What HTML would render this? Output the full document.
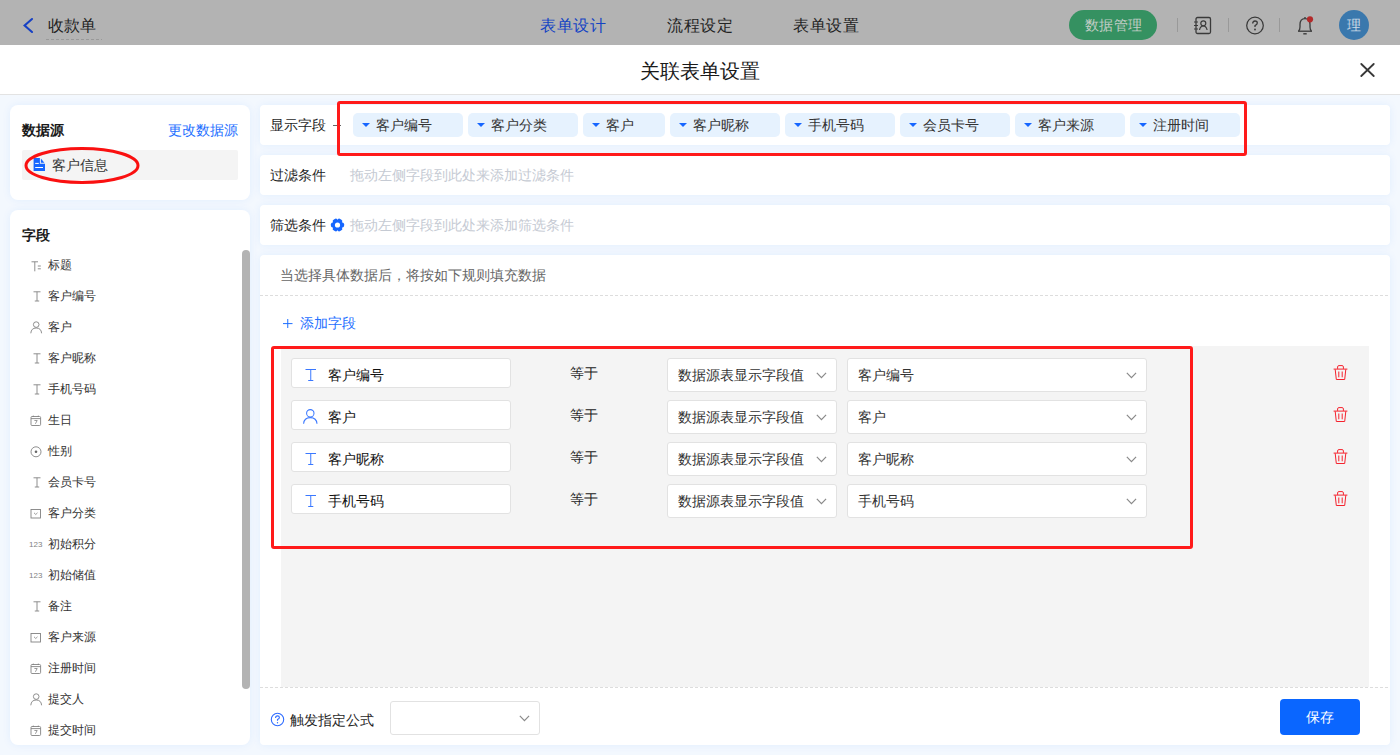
<!DOCTYPE html>
<html><head><meta charset="utf-8">
<style>
*{box-sizing:border-box;margin:0;padding:0}
html,body{width:1400px;height:755px;overflow:hidden;background:#f3f8fe;font-family:"Liberation Sans",sans-serif;color:#333;font-size:14px}
.a{position:absolute}
.t{position:absolute;white-space:nowrap;line-height:1}
#hdr{left:0;top:0;width:1400px;height:45px;background:#b3b3b3}
#mh{left:0;top:45px;width:1400px;height:50px;background:#fff;border-bottom:1px solid #e3e3e3}
.card{position:absolute;background:#fff;box-shadow:0 0 8px rgba(0,120,255,0.08)}
.tag{position:absolute;top:113px;height:24px;background:#e6f2fe;border-radius:5px}
.tag .tri{position:absolute;left:8.5px;top:10px;width:0;height:0;border-left:4.3px solid transparent;border-right:4.3px solid transparent;border-top:4.6px solid #1666ff}
.tag .tx{position:absolute;left:23px;top:5px;font-size:14px;line-height:14px;color:#333;white-space:nowrap}
.fld{position:absolute;left:22px;width:200px;height:20px}
.fld .ic{position:absolute;left:8px;top:0}
.fld .tx{position:absolute;left:26px;top:0;font-size:12px;line-height:12px;color:#333;white-space:nowrap}
.inp{position:absolute;left:291px;width:220px;height:30px;background:#fff;border:1px solid #e2e2e2;border-radius:3px}
.inp .tx{position:absolute;left:36px;top:9px;font-size:14px;line-height:14px;color:#111;white-space:nowrap}
.sel{position:absolute;height:34px;background:#fff;border:1px solid #e2e2e2;border-radius:3px}
.sel .tx{position:absolute;left:10px;top:9px;font-size:14px;line-height:14px;color:#333;white-space:nowrap}
.chev{position:absolute;width:10.5px;height:6.5px;overflow:visible}
.eq{position:absolute;left:570px;font-size:14px;line-height:14px;color:#222}
</style></head><body>
<!-- top header -->
<div id="hdr" class="a">
  <svg class="a" style="left:22px;top:17px" width="12" height="17" viewBox="0 0 12 17"><path d="M10 2 L2.6 8.5 L10 15" fill="none" stroke="#1640c4" stroke-width="2.1" stroke-linecap="round" stroke-linejoin="miter"/></svg>
  <div class="t" style="left:48px;top:18px;font-size:16px;color:#232323">收款单</div>
  <div class="a" style="left:46px;top:39px;width:56px;height:1px;background:repeating-linear-gradient(90deg,#999 0 3px,transparent 3px 5px)"></div>
  <div class="t" style="left:540px;top:18px;font-size:16px;letter-spacing:0.7px;color:#1443c4">表单设计</div>
  <div class="t" style="left:667px;top:18px;font-size:16px;letter-spacing:0.7px;color:#232323">流程设定</div>
  <div class="t" style="left:793px;top:18px;font-size:16px;letter-spacing:0.7px;color:#232323">表单设置</div>
  <div class="a" style="left:1069px;top:10px;width:88px;height:30px;border-radius:15px;background:#359161"></div>
  <div class="t" style="left:1085px;top:18px;font-size:14px;letter-spacing:0.3px;color:#c2cdc6">数据管理</div>
  <div class="a" style="left:1177px;top:18px;width:1px;height:14px;background:#999"></div>
  <div class="a" style="left:1228px;top:18px;width:1px;height:14px;background:#999"></div>
  <div class="a" style="left:1279px;top:18px;width:1px;height:14px;background:#999"></div>
  <!-- contact icon -->
  <svg class="a" style="left:1192px;top:16px" width="20" height="19" viewBox="0 0 20 19"><rect x="4" y="1.5" width="14.5" height="16" rx="1.5" fill="none" stroke="#3a3a3a" stroke-width="1.3"/><path d="M2 6h4M2 9.5h4M2 13h4" stroke="#3a3a3a" stroke-width="1.1"/><circle cx="11.3" cy="7.3" r="2.5" fill="none" stroke="#3a3a3a" stroke-width="1.2"/><path d="M7.5 14 Q8.3 10 11.3 10 Q14.3 10 15.1 14" fill="none" stroke="#3a3a3a" stroke-width="1.2"/></svg>
  <!-- help -->
  <svg class="a" style="left:1245px;top:16px" width="20" height="19" viewBox="0 0 20 19"><circle cx="10" cy="9.5" r="8.3" fill="none" stroke="#3a3a3a" stroke-width="1.25"/><path d="M7.7 7.4 Q7.7 5 10 5 Q12.3 5 12.3 7.1 Q12.3 8.5 10 9.6 L10 11" fill="none" stroke="#3a3a3a" stroke-width="1.3"/><circle cx="10" cy="13.5" r="0.9" fill="#3a3a3a"/></svg>
  <!-- bell -->
  <svg class="a" style="left:1296px;top:15px" width="20" height="21" viewBox="0 0 20 21"><path d="M9 3 L9 2" stroke="#3a3a3a" stroke-width="1.4"/><path d="M2.6 16 Q4 14.6 4 12 L4 9.5 Q4 3.6 9 3.6 Q14 3.6 14 9.5 L14 12 Q14 14.6 15.4 16" fill="none" stroke="#3a3a3a" stroke-width="1.3"/><path d="M2 16.2 H16" stroke="#3a3a3a" stroke-width="1.3"/><path d="M7.3 18.8 H10.7" stroke="#3a3a3a" stroke-width="1.4"/><circle cx="14" cy="4.3" r="3.1" fill="#b32a2a"/></svg>
  <div class="a" style="left:1339px;top:10px;width:30px;height:30px;border-radius:50%;background:#3a78ad"></div>
  <div class="t" style="left:1347px;top:19px;font-size:13.5px;color:#c9d8e6">理</div>
</div>

<!-- modal header -->
<div id="mh" class="a">
  <div class="t" style="left:640px;top:16px;font-size:20px;color:#1a1a1a">关联表单设置</div>
  <svg class="a" style="left:1360px;top:17.5px" width="15" height="14" viewBox="0 0 15 14"><path d="M1.3 1 L13.7 13 M13.7 1 L1.3 13" stroke="#383838" stroke-width="1.8" stroke-linecap="round"/></svg>
</div>

<!-- left cards -->
<div class="card" style="left:10px;top:105px;width:240px;height:95px;border-radius:8px"></div>
<div class="t" style="left:22px;top:123px;font-size:14px;font-weight:bold;color:#1a1a1a">数据源</div>
<div class="t" style="left:168px;top:123px;font-size:14px;color:#1e6fff">更改数据源</div>
<div class="a" style="left:22px;top:150px;width:216px;height:30px;background:#f4f4f4;border-radius:2px"></div>
<svg class="a" style="left:33px;top:157px" width="13" height="15" viewBox="0 0 13 15"><path d="M0.6 1 H6.9 V6.8 H12 V14.1 H0.6 Z" fill="#1666ff"/><path d="M7.9 1.6 L11.4 5.8 H7.9 Z" fill="#1666ff"/><path d="M2.2 6.4 H5.8 M2.2 10.5 H10" stroke="#fff" stroke-width="1"/></svg>
<div class="t" style="left:52px;top:158px;font-size:14px;color:#333">客户信息</div>

<div class="card" style="left:10px;top:210px;width:240px;height:535px;border-radius:8px"></div>
<div class="t" style="left:22px;top:228px;font-size:14px;font-weight:bold;color:#1a1a1a">字段</div>
<div class="a" style="left:242px;top:250px;width:8px;height:439px;border-radius:4px;background:#b3b3b3"></div>

<div class="fld" style="top:259px"><svg class="ic" style="left:9px;top:2px" width="11" height="11" viewBox="0 0 11 11"><path d="M0.5 0.8 H7 M3.8 0.8 V10.3" stroke="#828282" stroke-width="0.9"/><path d="M6.8 5 H9.8 M6.8 7.8 H9.8" stroke="#828282" stroke-width="0.9"/></svg><div class="tx">标题</div></div>
<div class="fld" style="top:290px"><svg class="ic" style="left:11px;top:1px" width="8" height="11" viewBox="0 0 8 11"><path d="M0.5 0.8 H7.5 M4 0.8 V10 M1.8 10 H6.2" stroke="#828282" stroke-width="0.9"/></svg><div class="tx">客户编号</div></div>
<div class="fld" style="top:321px"><svg class="ic" style="left:8px;top:0px" width="13" height="13" viewBox="0 0 13 13"><circle cx="6.2" cy="3.6" r="2.8" fill="none" stroke="#828282" stroke-width="0.9"/><path d="M0.8 12.3 Q1.2 7 6.2 7 Q11.2 7 11.6 12.3" fill="none" stroke="#828282" stroke-width="0.9"/></svg><div class="tx">客户</div></div>
<div class="fld" style="top:352px"><svg class="ic" style="left:11px;top:1px" width="8" height="11" viewBox="0 0 8 11"><path d="M0.5 0.8 H7.5 M4 0.8 V10 M1.8 10 H6.2" stroke="#828282" stroke-width="0.9"/></svg><div class="tx">客户昵称</div></div>
<div class="fld" style="top:383px"><svg class="ic" style="left:11px;top:1px" width="8" height="11" viewBox="0 0 8 11"><path d="M0.5 0.8 H7.5 M4 0.8 V10 M1.8 10 H6.2" stroke="#828282" stroke-width="0.9"/></svg><div class="tx">手机号码</div></div>
<div class="fld" style="top:414px"><svg class="ic" style="left:8px;top:1px" width="12" height="12" viewBox="0 0 12 12"><rect x="1" y="1.5" width="9.6" height="9" rx="1" fill="none" stroke="#828282" stroke-width="0.9"/><path d="M1 3.6 H10.6 M3.3 0.6 V2 M8.3 0.6 V2" stroke="#828282" stroke-width="0.9"/><path d="M4.4 5.5 H7.2 L5.4 8.8" fill="none" stroke="#828282" stroke-width="0.8"/></svg><div class="tx">生日</div></div>
<div class="fld" style="top:445px"><svg class="ic" style="left:7.5px;top:1px" width="12" height="12" viewBox="0 0 12 12"><circle cx="6" cy="5.8" r="5" fill="none" stroke="#828282" stroke-width="0.9"/><circle cx="6" cy="5.8" r="1.3" fill="#666"/></svg><div class="tx">性别</div></div>
<div class="fld" style="top:476px"><svg class="ic" style="left:11px;top:1px" width="8" height="11" viewBox="0 0 8 11"><path d="M0.5 0.8 H7.5 M4 0.8 V10 M1.8 10 H6.2" stroke="#828282" stroke-width="0.9"/></svg><div class="tx">会员卡号</div></div>
<div class="fld" style="top:507px"><svg class="ic" style="left:8px;top:1px" width="12" height="12" viewBox="0 0 12 12"><rect x="1" y="1.5" width="9.5" height="8.5" fill="none" stroke="#828282" stroke-width="0.9"/><path d="M4 4.8 L5.75 6.5 L7.5 4.8" fill="none" stroke="#828282" stroke-width="0.8"/></svg><div class="tx">客户分类</div></div>
<div class="fld" style="top:538px"><div class="ic t" style="left:7px;top:3px;font-size:8px;color:#828282;width:auto;height:auto">123</div><div class="tx">初始积分</div></div>
<div class="fld" style="top:569px"><div class="ic t" style="left:7px;top:3px;font-size:8px;color:#828282;width:auto;height:auto">123</div><div class="tx">初始储值</div></div>
<div class="fld" style="top:600px"><svg class="ic" style="left:11px;top:1px" width="8" height="11" viewBox="0 0 8 11"><path d="M0.5 0.8 H7.5 M4 0.8 V10 M1.8 10 H6.2" stroke="#828282" stroke-width="0.9"/></svg><div class="tx">备注</div></div>
<div class="fld" style="top:631px"><svg class="ic" style="left:8px;top:1px" width="12" height="12" viewBox="0 0 12 12"><rect x="1" y="1.5" width="9.5" height="8.5" fill="none" stroke="#828282" stroke-width="0.9"/><path d="M4 4.8 L5.75 6.5 L7.5 4.8" fill="none" stroke="#828282" stroke-width="0.8"/></svg><div class="tx">客户来源</div></div>
<div class="fld" style="top:662px"><svg class="ic" style="left:8px;top:1px" width="12" height="12" viewBox="0 0 12 12"><rect x="1" y="1.5" width="9.6" height="9" rx="1" fill="none" stroke="#828282" stroke-width="0.9"/><path d="M1 3.6 H10.6 M3.3 0.6 V2 M8.3 0.6 V2" stroke="#828282" stroke-width="0.9"/><path d="M4.4 5.5 H7.2 L5.4 8.8" fill="none" stroke="#828282" stroke-width="0.8"/></svg><div class="tx">注册时间</div></div>
<div class="fld" style="top:693px"><svg class="ic" style="left:8px;top:0px" width="13" height="13" viewBox="0 0 13 13"><circle cx="6.2" cy="3.6" r="2.8" fill="none" stroke="#828282" stroke-width="0.9"/><path d="M0.8 12.3 Q1.2 7 6.2 7 Q11.2 7 11.6 12.3" fill="none" stroke="#828282" stroke-width="0.9"/></svg><div class="tx">提交人</div></div>
<div class="fld" style="top:724px"><svg class="ic" style="left:8px;top:1px" width="12" height="12" viewBox="0 0 12 12"><rect x="1" y="1.5" width="9.6" height="9" rx="1" fill="none" stroke="#828282" stroke-width="0.9"/><path d="M1 3.6 H10.6 M3.3 0.6 V2 M8.3 0.6 V2" stroke="#828282" stroke-width="0.9"/><path d="M4.4 5.5 H7.2 L5.4 8.8" fill="none" stroke="#828282" stroke-width="0.8"/></svg><div class="tx">提交时间</div></div>

<!-- right cards -->
<div class="card" style="left:260px;top:105px;width:1130px;height:40px;border-radius:4px"></div>
<div class="t" style="left:270px;top:118px;font-size:14px;color:#1f1f1f">显示字段</div>
<div class="a" style="left:333px;top:125px;width:8px;height:1px;background:#666"></div>
<div class="tag" style="left:353px;width:110px"><div class="tri"></div><div class="tx">客户编号</div></div>
<div class="tag" style="left:468px;width:110px"><div class="tri"></div><div class="tx">客户分类</div></div>
<div class="tag" style="left:583px;width:82px"><div class="tri"></div><div class="tx">客户</div></div>
<div class="tag" style="left:670px;width:110px"><div class="tri"></div><div class="tx">客户昵称</div></div>
<div class="tag" style="left:785px;width:110px"><div class="tri"></div><div class="tx">手机号码</div></div>
<div class="tag" style="left:900px;width:110px"><div class="tri"></div><div class="tx">会员卡号</div></div>
<div class="tag" style="left:1015px;width:110px"><div class="tri"></div><div class="tx">客户来源</div></div>
<div class="tag" style="left:1130px;width:110px"><div class="tri"></div><div class="tx">注册时间</div></div>

<div class="card" style="left:260px;top:155px;width:1130px;height:40px;border-radius:4px"></div>
<div class="t" style="left:270px;top:168px;font-size:14px;color:#1f1f1f">过滤条件</div>
<div class="t" style="left:350px;top:168px;font-size:14px;color:#c5cad3">拖动左侧字段到此处来添加过滤条件</div>

<div class="card" style="left:260px;top:205px;width:1130px;height:40px;border-radius:4px"></div>
<div class="t" style="left:270px;top:218px;font-size:14px;color:#1f1f1f">筛选条件</div>
<svg class="a" style="left:330px;top:218px" width="15" height="14" viewBox="0 0 15 14"><g fill="#1666ff" transform="translate(7.5 7)"><circle r="5.3"/><rect x="-6.6" y="-2.5" width="13.2" height="5" rx="1.8"/><rect x="-6.6" y="-2.5" width="13.2" height="5" rx="1.8" transform="rotate(60)"/><rect x="-6.6" y="-2.5" width="13.2" height="5" rx="1.8" transform="rotate(120)"/></g><circle cx="7.5" cy="7" r="2.6" fill="#fff"/></svg>
<div class="t" style="left:350px;top:218px;font-size:14px;color:#c5cad3">拖动左侧字段到此处来添加筛选条件</div>

<div class="card" style="left:260px;top:255px;width:1130px;height:490px;border-radius:4px"></div>
<div class="t" style="left:280px;top:268px;font-size:14px;color:#666">当选择具体数据后，将按如下规则填充数据</div>
<div class="a" style="left:260px;top:295px;width:1130px;height:1px;background:repeating-linear-gradient(90deg,#ddd 0 3px,transparent 3px 5px)"></div>
<svg class="a" style="left:283px;top:319px" width="10" height="10" viewBox="0 0 10 10"><path d="M0 4.6 H9.5 M4.75 0 V9" stroke="#1e6fff" stroke-width="1"/></svg>
<div class="t" style="left:300px;top:316px;font-size:14px;color:#1e6fff">添加字段</div>

<div class="a" style="left:281px;top:346px;width:1088px;height:341px;background:#f4f4f4"></div>
<div class="inp" style="top:358px"><svg class="a" style="left:12px;top:9px" width="12" height="14" viewBox="0 0 12 14"><path d="M1.5 1.5 H12 M6.75 1.5 V12.5 M4.2 12.5 H9.3" stroke="#3a78ff" stroke-width="1"/></svg><div class="tx">客户编号</div></div>
<div class="eq" style="top:366px">等于</div>
<div class="sel" style="left:667px;top:358px;width:170px"><div class="tx">数据源表显示字段值</div></div>
<svg class="chev" style="left:816px;top:372px" viewBox="0 0 10 6"><path d="M0.8 0.8 L5.2 5.3 L9.6 0.8" fill="none" stroke="#8a8a8a" stroke-width="1.15"/></svg>
<div class="sel" style="left:847px;top:358px;width:300px"><div class="tx">客户编号</div></div>
<svg class="chev" style="left:1126px;top:372px" viewBox="0 0 10 6"><path d="M0.8 0.8 L5.2 5.3 L9.6 0.8" fill="none" stroke="#8a8a8a" stroke-width="1.15"/></svg>
<svg class="a" style="left:1333px;top:365px" width="15" height="16" viewBox="0 0 15 16"><path d="M0.6 4.1 H14.4" stroke="#f5222d" stroke-width="1"/><path d="M4.6 3.9 V1.9 Q4.6 0.6 5.9 0.6 H9.1 Q10.4 0.6 10.4 1.9 V3.9" fill="none" stroke="#f5222d" stroke-width="1"/><path d="M2.2 4.3 L3.3 14.5 H11.7 L12.8 4.3" fill="none" stroke="#f5222d" stroke-width="1"/><path d="M5.8 6.5 V12.3 M9.2 6.5 V12.3" stroke="#f5222d" stroke-width="1"/></svg>
<div class="inp" style="top:400px"><svg class="a" style="left:10px;top:7px" width="17" height="17" viewBox="0 0 17 17"><circle cx="8.3" cy="5.3" r="3.7" fill="none" stroke="#3a78ff" stroke-width="1.05"/><path d="M1.6 15.8 Q2 9.6 8.3 9.6 Q14.6 9.6 15 15.8" fill="none" stroke="#3a78ff" stroke-width="1.05"/></svg><div class="tx">客户</div></div>
<div class="eq" style="top:408px">等于</div>
<div class="sel" style="left:667px;top:400px;width:170px"><div class="tx">数据源表显示字段值</div></div>
<svg class="chev" style="left:816px;top:414px" viewBox="0 0 10 6"><path d="M0.8 0.8 L5.2 5.3 L9.6 0.8" fill="none" stroke="#8a8a8a" stroke-width="1.15"/></svg>
<div class="sel" style="left:847px;top:400px;width:300px"><div class="tx">客户</div></div>
<svg class="chev" style="left:1126px;top:414px" viewBox="0 0 10 6"><path d="M0.8 0.8 L5.2 5.3 L9.6 0.8" fill="none" stroke="#8a8a8a" stroke-width="1.15"/></svg>
<svg class="a" style="left:1333px;top:407px" width="15" height="16" viewBox="0 0 15 16"><path d="M0.6 4.1 H14.4" stroke="#f5222d" stroke-width="1"/><path d="M4.6 3.9 V1.9 Q4.6 0.6 5.9 0.6 H9.1 Q10.4 0.6 10.4 1.9 V3.9" fill="none" stroke="#f5222d" stroke-width="1"/><path d="M2.2 4.3 L3.3 14.5 H11.7 L12.8 4.3" fill="none" stroke="#f5222d" stroke-width="1"/><path d="M5.8 6.5 V12.3 M9.2 6.5 V12.3" stroke="#f5222d" stroke-width="1"/></svg>
<div class="inp" style="top:442px"><svg class="a" style="left:12px;top:9px" width="12" height="14" viewBox="0 0 12 14"><path d="M1.5 1.5 H12 M6.75 1.5 V12.5 M4.2 12.5 H9.3" stroke="#3a78ff" stroke-width="1"/></svg><div class="tx">客户昵称</div></div>
<div class="eq" style="top:450px">等于</div>
<div class="sel" style="left:667px;top:442px;width:170px"><div class="tx">数据源表显示字段值</div></div>
<svg class="chev" style="left:816px;top:456px" viewBox="0 0 10 6"><path d="M0.8 0.8 L5.2 5.3 L9.6 0.8" fill="none" stroke="#8a8a8a" stroke-width="1.15"/></svg>
<div class="sel" style="left:847px;top:442px;width:300px"><div class="tx">客户昵称</div></div>
<svg class="chev" style="left:1126px;top:456px" viewBox="0 0 10 6"><path d="M0.8 0.8 L5.2 5.3 L9.6 0.8" fill="none" stroke="#8a8a8a" stroke-width="1.15"/></svg>
<svg class="a" style="left:1333px;top:449px" width="15" height="16" viewBox="0 0 15 16"><path d="M0.6 4.1 H14.4" stroke="#f5222d" stroke-width="1"/><path d="M4.6 3.9 V1.9 Q4.6 0.6 5.9 0.6 H9.1 Q10.4 0.6 10.4 1.9 V3.9" fill="none" stroke="#f5222d" stroke-width="1"/><path d="M2.2 4.3 L3.3 14.5 H11.7 L12.8 4.3" fill="none" stroke="#f5222d" stroke-width="1"/><path d="M5.8 6.5 V12.3 M9.2 6.5 V12.3" stroke="#f5222d" stroke-width="1"/></svg>
<div class="inp" style="top:484px"><svg class="a" style="left:12px;top:9px" width="12" height="14" viewBox="0 0 12 14"><path d="M1.5 1.5 H12 M6.75 1.5 V12.5 M4.2 12.5 H9.3" stroke="#3a78ff" stroke-width="1"/></svg><div class="tx">手机号码</div></div>
<div class="eq" style="top:492px">等于</div>
<div class="sel" style="left:667px;top:484px;width:170px"><div class="tx">数据源表显示字段值</div></div>
<svg class="chev" style="left:816px;top:498px" viewBox="0 0 10 6"><path d="M0.8 0.8 L5.2 5.3 L9.6 0.8" fill="none" stroke="#8a8a8a" stroke-width="1.15"/></svg>
<div class="sel" style="left:847px;top:484px;width:300px"><div class="tx">手机号码</div></div>
<svg class="chev" style="left:1126px;top:498px" viewBox="0 0 10 6"><path d="M0.8 0.8 L5.2 5.3 L9.6 0.8" fill="none" stroke="#8a8a8a" stroke-width="1.15"/></svg>
<svg class="a" style="left:1333px;top:491px" width="15" height="16" viewBox="0 0 15 16"><path d="M0.6 4.1 H14.4" stroke="#f5222d" stroke-width="1"/><path d="M4.6 3.9 V1.9 Q4.6 0.6 5.9 0.6 H9.1 Q10.4 0.6 10.4 1.9 V3.9" fill="none" stroke="#f5222d" stroke-width="1"/><path d="M2.2 4.3 L3.3 14.5 H11.7 L12.8 4.3" fill="none" stroke="#f5222d" stroke-width="1"/><path d="M5.8 6.5 V12.3 M9.2 6.5 V12.3" stroke="#f5222d" stroke-width="1"/></svg>

<div class="a" style="left:260px;top:687px;width:1130px;height:1px;background:repeating-linear-gradient(90deg,#ddd 0 3px,transparent 3px 5px)"></div>
<svg class="a" style="left:270px;top:712px" width="15" height="15" viewBox="0 0 15 15"><circle cx="7.5" cy="7.5" r="6.2" fill="none" stroke="#2d6bff" stroke-width="1.1"/><path d="M5.6 5.9 Q5.6 3.9 7.5 3.9 Q9.4 3.9 9.4 5.6 Q9.4 6.8 7.5 7.6 L7.5 8.8" fill="none" stroke="#2d6bff" stroke-width="1.1"/><circle cx="7.5" cy="10.7" r="0.7" fill="#2d6bff"/></svg>
<div class="t" style="left:290px;top:713px;font-size:14px;color:#1f1f1f">触发指定公式</div>
<div class="sel" style="left:390px;top:701px;width:150px;height:34px"></div>
<svg class="chev" style="left:519px;top:715px" viewBox="0 0 10 6"><path d="M0.8 0.8 L5.2 5.3 L9.6 0.8" fill="none" stroke="#8a8a8a" stroke-width="1.15"/></svg>
<div class="a" style="left:1280px;top:699px;width:80px;height:36px;background:#0a66ff;border-radius:4px"></div>
<div class="t" style="left:1306px;top:710px;font-size:14px;color:#fff">保存</div>

<!-- annotations -->
<div class="a" style="left:337px;top:101px;width:910px;height:55px;border:3px solid #ff1a1a;border-radius:3px"></div>
<div class="a" style="left:271px;top:346px;width:922px;height:203px;border:3px solid #ff1a1a;border-radius:3px"></div>
<svg class="a" style="left:20px;top:144px" width="124" height="44" viewBox="0 0 124 44"><ellipse cx="62" cy="21.5" rx="56" ry="17" fill="none" stroke="#fa1010" stroke-width="3"/></svg>
</body></html>
